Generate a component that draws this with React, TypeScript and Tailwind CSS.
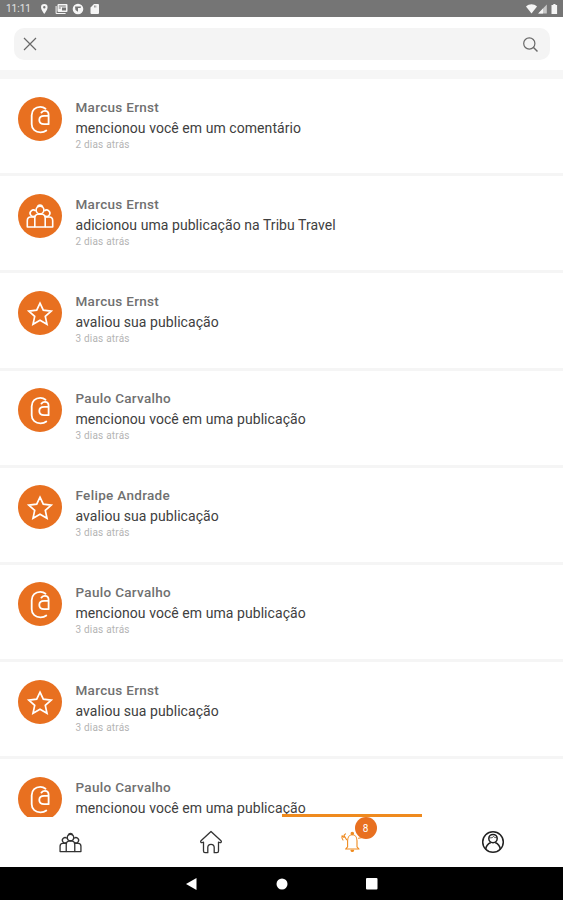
import React from 'react';

type Kind = 'mention' | 'group' | 'rating';

interface Notification {
  id: number;
  kind: Kind;
  name: string;
  text: string;
  when: string;
}

const NOTIFICATIONS: Notification[] = [
  { id: 1, kind: 'mention', name: 'Marcus Ernst', text: 'mencionou você em um comentário', when: '2 dias atrás' },
  { id: 2, kind: 'group', name: 'Marcus Ernst', text: 'adicionou uma publicação na Tribu Travel', when: '2 dias atrás' },
  { id: 3, kind: 'rating', name: 'Marcus Ernst', text: 'avaliou sua publicação', when: '3 dias atrás' },
  { id: 4, kind: 'mention', name: 'Paulo Carvalho', text: 'mencionou você em uma publicação', when: '3 dias atrás' },
  { id: 5, kind: 'rating', name: 'Felipe Andrade', text: 'avaliou sua publicação', when: '3 dias atrás' },
  { id: 6, kind: 'mention', name: 'Paulo Carvalho', text: 'mencionou você em uma publicação', when: '3 dias atrás' },
  { id: 7, kind: 'rating', name: 'Marcus Ernst', text: 'avaliou sua publicação', when: '3 dias atrás' },
  { id: 8, kind: 'mention', name: 'Paulo Carvalho', text: 'mencionou você em uma publicação', when: '3 dias atrás' },
];

const MentionIcon = () => (
  <svg width="44" height="44" viewBox="0 0 44 44" fill="none" stroke="currentColor" strokeWidth="1.8" strokeLinecap="round" strokeLinejoin="round">
    <path d="M27.500 11.700c-1.400-1.200-3.200-1.800-5.200-1.800-5 0-8.600 3.300-8.600 8.300v9c0 5 3.800 8.200 8.800 8.200 2.300 0 4.300-.6 5.800-1.900" />
    <path d="M23.400 15.600c1-1.200 2.200-1.700 3.500-1.700 2.300 0 3.700 1.500 3.700 4v9.300h-4.400c-3 0-4.900-1.700-4.900-4.200s1.900-4.200 4.900-4.200h4.400" />
  </svg>
);

const GroupIcon = ({ size, stroke }: { size: number; stroke: number }) => (
  <svg width={size} height={size} viewBox="0 0 28 28" fill="none" stroke="currentColor" strokeWidth={stroke} strokeLinejoin="round">
    <circle cx="14" cy="8" r="3.900" />
    <path d="M11.500 5.200c.3-3 4.700-3 5 0" />
    <path d="M9.600 9a3.200 3.200 0 1 0-.6 5M18.400 9a3.200 3.200 0 1 1 .6 5" />
    <path d="M8.800 25V16.500c0-2.400 1.200-3.900 3-4.200h4.400c1.800.3 3 1.800 3 4.200V25z" />
    <path d="M8.800 15H4.600c-2 0-3.300 1.700-3.300 3.700V25h7.500M19.200 15h4.200c2 0 3.300 1.700 3.300 3.700V25h-7.500" />
  </svg>
);

const StarIcon = () => (
  <svg width="44" height="44" viewBox="0 0 44 44" fill="none" stroke="currentColor" strokeWidth="1.7" strokeLinejoin="miter">
    <path d="M22 12.200l3.300 7 7.900.9-5.900 5.300 1.700 7.900-7-4-7 4 1.700-7.900-5.900-5.300 7.900-.9z" />
  </svg>
);

const HomeIcon = () => (
  <svg width="24" height="24" viewBox="0 0 24 24" fill="none" stroke="currentColor" strokeWidth="1.300" strokeLinejoin="round">
    <path d="M12 1.500L2 10.800c-.9 1 .1 2.200 1.400 1.700l1.100-.4v9c0 1 .6 1.600 1.500 1.600h2.800v-5.200c0-2 1.300-3.200 3.200-3.200s3.200 1.200 3.200 3.200v5.200H18c.9 0 1.500-.6 1.500-1.600v-9l1.100.4c1.300.5 2.300-.7 1.400-1.700z" />
  </svg>
);

const BellIcon = () => (
  <svg width="24" height="24" viewBox="0 0 24 24" fill="none" stroke="currentColor" strokeWidth="1.100" strokeLinejoin="round" strokeLinecap="round">
    <path d="M5.600 19l2-2.200v-6c0-3.400 1.900-6 4.700-6s4.700 2.600 4.700 6v6l2 2.200z" />
    <circle cx="12.300" cy="3.500" r="1.200" fill="currentColor" />
    <path d="M11 20.300c.2 1.400 2.400 1.400 2.600 0z" fill="currentColor" />
    <path d="M5.500 3.800L3.900 5.300l2.700 4.400M2 5.800l1.900 1.500M2 5.800c-.4 1.500 0 3 1 4.200" />
    <path d="M18.500 8.200l2.700-.4" />
  </svg>
);

const ProfileIcon = () => (
  <svg width="24" height="24" viewBox="0 0 24 24" fill="none" stroke="currentColor" strokeWidth="1.500">
    <circle cx="12" cy="12" r="10.300" />
    <circle cx="12" cy="8.600" r="4.200" />
    <path d="M8.400 7.700c2 .4 3.300-.1 4.100-1.200.8.900 1.900 1.200 3.100 1.100" strokeWidth=".8" />
    <path d="M4.800 19.200c.3-3.400 1.900-5.400 5-6.700M19.200 19.200c-.3-3.400-1.900-5.400-5-6.700" />
  </svg>
);

const KindIcon = ({ kind }: { kind: Kind }) => {
  if (kind === 'mention') return <MentionIcon />;
  if (kind === 'group') return <GroupIcon size={28} stroke={1.6} />;
  return <StarIcon />;
};

const StatusBar = () => (
  <div className="flex h-[17px] shrink-0 items-center bg-[#757575] pt-[1px] pr-[4px] pl-[6px] text-[#f5f5f5]">
    <span className="w-[35px] text-[10px] leading-none text-[#e4e4e4]">11:11</span>
    <svg width="62" height="12" viewBox="0 0 62 12" fill="currentColor">
      <path fillRule="evenodd" d="M3.300 1a3.300 3.300 0 0 0-3.300 3.300C0 7 3.300 11 3.300 11s3.300-4 3.300-6.700A3.300 3.300 0 0 0 3.300 1zm0 2.100a1.200 1.200 0 1 1 0 2.400 1.200 1.200 0 0 1 0-2.400z" />
      <path fillRule="evenodd" d="M17.500 1h8a1 1 0 0 1 1 1v6a1 1 0 0 1-1 1h-8a1 1 0 0 1-1-1V2a1 1 0 0 1 1-1zm.3 1.500v1h7v-1zm0 2v1h2v-1zm3.200 0v3h4v-3z" />
      <path d="M14.600 3h1v7h9v1h-9a1 1 0 0 1-1-1z" />
      <path fillRule="evenodd" d="M37 .7a5.300 5.300 0 1 0 0 10.600A5.300 5.300 0 0 0 37 .7zM34 3.500h6.200l-.7 1.500H37v3.700L34.500 7z" />
      <path fillRule="evenodd" d="M53 1h4a1 1 0 0 1 1 1v8a1 1 0 0 1-1 1h-6.500a1 1 0 0 1-1-1V4.500zm0 1.500v2h.7v-2zm1.500 0v2h.7v-2z" />
    </svg>
    <svg className="ml-auto" width="33" height="12" viewBox="0 0 33 12" fill="currentColor">
      <path d="M0 3.500C3.300.6 7.700.6 11 3.500L5.500 10.500z" />
      <path d="M12.200 10.500L20.800 1.500v9z" opacity=".65" />
      <path d="M12.200 10.500L17 5.500v5z" />
      <path d="M25.500 2h1.800V1h2.200v1h1.600v9h-5.600z" />
    </svg>
  </div>
);

const SearchBar = () => (
  <div className="h-[53px] shrink-0 pt-[11px] pr-[13px] pl-[14px]">
    <div className="flex h-8 items-center justify-between rounded-[10px] bg-[#f4f4f4] pr-[11px] pl-[8px] text-[#686868]">
      <svg width="16" height="16" viewBox="0 0 16 16" fill="none" stroke="currentColor" strokeWidth="1.200">
        <path d="M2 2l12 12M14 2L2 14" />
      </svg>
      <svg width="17" height="17" viewBox="0 0 17 17" fill="none" stroke="currentColor" strokeWidth="1.200">
        <circle cx="7.300" cy="7.500" r="5.600" />
        <path d="M11.500 11.500l4 4" strokeWidth="1.500" />
      </svg>
    </div>
  </div>
);

const NotificationRow = ({ item }: { item: Notification }) => (
  <li className="flex h-[97.200px] shrink-0 border-b-[3.500px] border-[#f5f5f5] pt-[17.500px] pl-[18px]">
    <div className="flex size-11 shrink-0 items-center justify-center rounded-full bg-[#e87020] text-white">
      <KindIcon kind={item.kind} />
    </div>
    <div className="pl-[13.500px] whitespace-nowrap">
      <p className="text-[13.500px] leading-[21px] font-medium tracking-[0.310px] text-[#707070]">{item.name}</p>
      <p className="text-[14px] leading-[21px] tracking-[0.060px] text-[#404040]">{item.text}</p>
      <p className="text-[10px] leading-[12px] tracking-[0.200px] text-[#b4b4b4]">{item.when}</p>
    </div>
  </li>
);

const TabBar = () => (
  <nav className="relative grid h-[50px] shrink-0 grid-cols-4 bg-white text-[#333]">
    <div className="absolute -top-[3px] left-1/2 h-[2.500px] w-1/4 bg-[#ef8a1e]" />
    <button className="flex items-center justify-center" aria-label="Tribus">
      <GroupIcon size={23} stroke={1.6} />
    </button>
    <button className="flex items-center justify-center" aria-label="Início">
      <HomeIcon />
    </button>
    <button className="relative flex items-center justify-center text-[#ef8a1e]" aria-label="Notificações">
      <BellIcon />
      <span className="absolute top-0 left-[73px] flex size-[22px] items-center justify-center rounded-full bg-[#e87020] text-[10px] text-white">8</span>
    </button>
    <button className="flex items-center justify-center text-[#222]" aria-label="Perfil">
      <ProfileIcon />
    </button>
  </nav>
);

const SystemBar = () => (
  <div className="flex h-[33px] shrink-0 items-center justify-center bg-black text-white">
    <svg width="196" height="16" viewBox="0 0 196 16" fill="currentColor">
      <path d="M2 8l10.500-6v12z" />
      <circle cx="98" cy="8" r="5.500" />
      <rect x="182" y="2" width="11.500" height="11.500" rx="1" />
    </svg>
  </div>
);

export default function App() {
  return (
    <div className="flex h-[900px] w-[563px] flex-col overflow-hidden bg-white font-[Roboto,sans-serif]">
      <StatusBar />
      <SearchBar />
      <div className="h-[9px] shrink-0 bg-[#f6f6f6]" />
      <ul className="flex min-h-0 flex-1 flex-col overflow-hidden">
        {NOTIFICATIONS.map((item) => (
          <NotificationRow key={item.id} item={item} />
        ))}
      </ul>
      <TabBar />
      <SystemBar />
    </div>
  );
}
